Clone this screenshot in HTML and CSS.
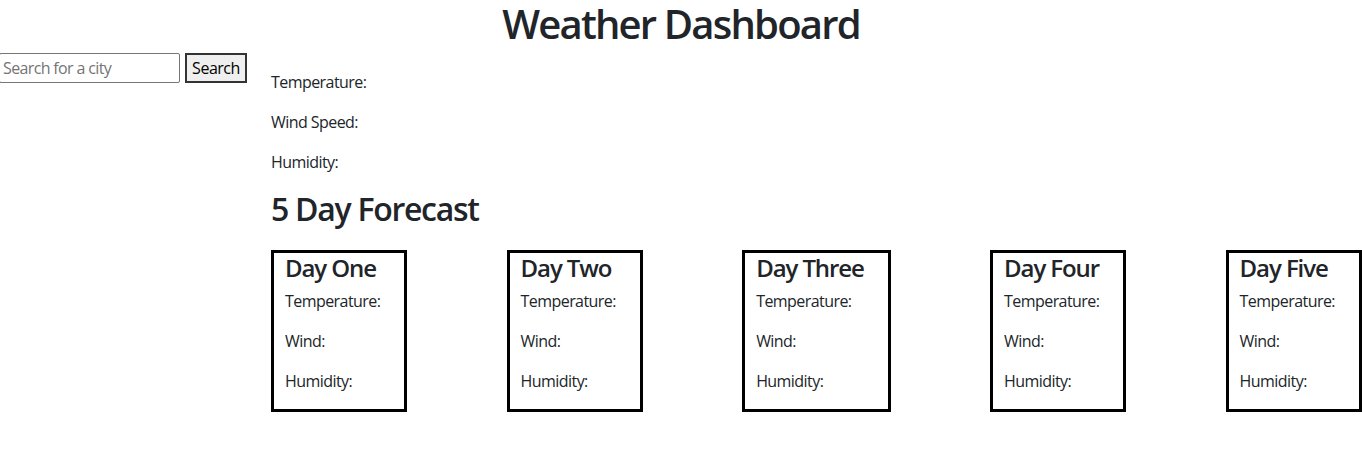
FILE: index.html
```html
<!DOCTYPE html>
<html lang="en">
<head>
<meta charset="utf-8">
<title>Weather Dashboard</title>
<link rel="stylesheet" href="styles.css">
</head>
<body>
<header class="site-header">
  <h1 class="title">Weather Dashboard</h1>
</header>
<div class="layout">
  <aside class="sidebar">
    <form class="search-form">
      <input class="search-input" type="text" placeholder="Search for a city">
      <button class="search-btn" type="button">Search</button>
    </form>
  </aside>
  <main class="content">
    <section class="current">
      <p class="stat">Temperature:</p>
      <p class="stat">Wind Speed:</p>
      <p class="stat">Humidity:</p>
    </section>
    <h2 class="section-title">5 Day Forecast</h2>
    <div class="forecast">
      <div class="card">
        <h4 class="card-title">Day One</h4>
        <p class="stat">Temperature:</p>
        <p class="stat">Wind:</p>
        <p class="stat">Humidity:</p>
      </div>
      <div class="card">
        <h4 class="card-title">Day Two</h4>
        <p class="stat">Temperature:</p>
        <p class="stat">Wind:</p>
        <p class="stat">Humidity:</p>
      </div>
      <div class="card">
        <h4 class="card-title">Day Three</h4>
        <p class="stat">Temperature:</p>
        <p class="stat">Wind:</p>
        <p class="stat">Humidity:</p>
      </div>
      <div class="card">
        <h4 class="card-title">Day Four</h4>
        <p class="stat">Temperature:</p>
        <p class="stat">Wind:</p>
        <p class="stat">Humidity:</p>
      </div>
      <div class="card">
        <h4 class="card-title">Day Five</h4>
        <p class="stat">Temperature:</p>
        <p class="stat">Wind:</p>
        <p class="stat">Humidity:</p>
      </div>
    </div>
  </main>
</div>
</body>
</html>
```
FILE: styles.css
```css
* { box-sizing: border-box; }

body {
  margin: 0;
  font-family: "Open Sans", "Noto Sans", sans-serif;
  font-size: 16px;
  line-height: 1.5;
  letter-spacing: -0.035em;
  color: #212529;
  background: #fff;
  overflow: hidden;
}

.site-header {
  height: 53px;
}

.title {
  margin: 0;
  text-align: center;
  font-size: 40px;
  font-weight: 600;
  line-height: 48px;
  letter-spacing: -0.045em;
}

.layout {
  display: flex;
}

.sidebar {
  flex: 0 0 271px;
}

.search-form {
  display: flex;
  align-items: flex-start;
  margin-left: -1px;
}

.search-input {
  width: 181px;
  height: 30px;
  padding: 1px 3px;
  border: 1px solid #767676;
  border-radius: 2px;
  font: inherit;
  font-size: 16px;
  letter-spacing: -0.04em;
  color: #212529;
}

.search-input::placeholder {
  color: #757575;
}

.search-btn {
  margin-left: 5px;
  width: 62px;
  height: 30px;
  padding: 0 4px;
  border: 2px solid #333;
  background: #efefef;
  font: inherit;
  font-size: 16px;
  line-height: 1;
  letter-spacing: -0.03em;
  color: #000;
}

.content {
  flex: 1;
  padding-top: 17px;
}

.stat {
  margin: 0 0 16px;
  line-height: 24px;
}

.section-title {
  margin: 0 0 22px;
  font-size: 32px;
  font-weight: 600;
  line-height: 38px;
  letter-spacing: -0.04em;
}

.forecast {
  display: flex;
  justify-content: space-between;
  align-items: flex-start;
}

.card {
  border: 3px solid #000;
  padding: 0 24px 0 11px;
}

.card-title {
  margin: 0 0 7px;
  font-size: 24px;
  font-weight: 600;
  line-height: 29px;
  letter-spacing: -0.045em;
}

.card .stat:last-child {
  margin-bottom: 16px;
}
```
